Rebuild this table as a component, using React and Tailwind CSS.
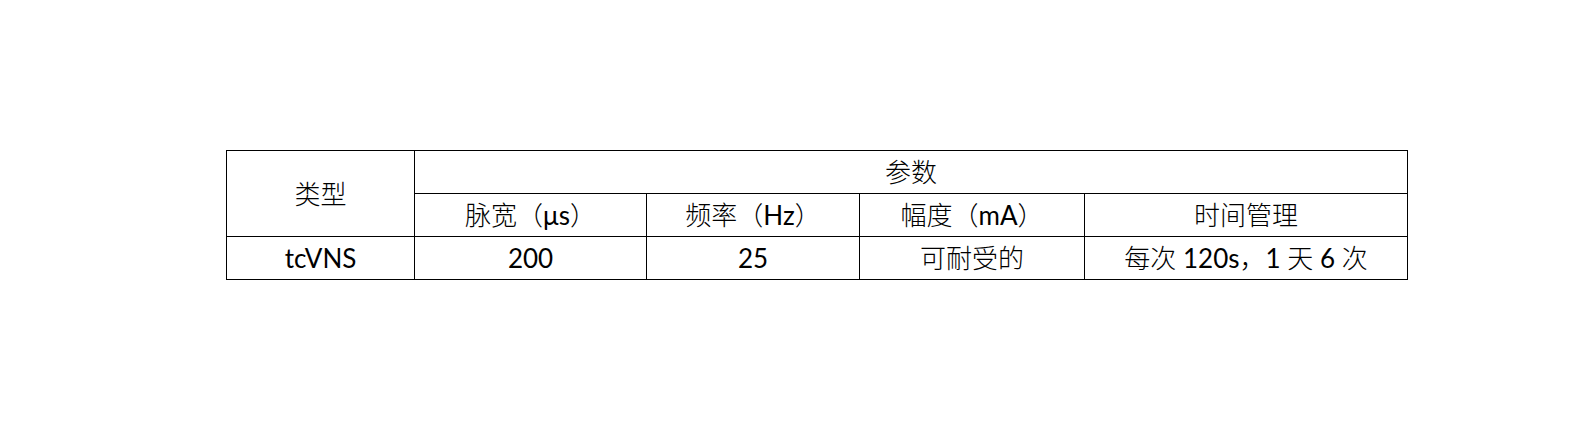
function C({ children }) {
  return <span className="font-light">{children}</span>;
}

export default function App() {
  const cell = "border border-black text-center align-middle p-0";
  return (
    <div
      className="w-[1587px] h-[430px] bg-white pt-[150px] pl-[226px] text-black"
      style={{ fontFamily: '"Lato", "Noto Sans CJK SC", sans-serif' }}
    >
      <table className="table-fixed border-collapse w-[1181px] text-[26px] leading-none">
        <colgroup>
          <col className="w-[188px]" />
          <col className="w-[232px]" />
          <col className="w-[213px]" />
          <col className="w-[225px]" />
          <col className="w-[323px]" />
        </colgroup>
        <tbody>
          <tr className="h-[43px]">
            <td rowSpan={2} className={cell}><C>类型</C></td>
            <td colSpan={4} className={cell}><C>参数</C></td>
          </tr>
          <tr className="h-[43px]">
            <td className={cell}><C>脉宽（</C>μs<C>）</C></td>
            <td className={cell}><C>频率（</C>Hz<C>）</C></td>
            <td className={cell}><C>幅度（</C>mA<C>）</C></td>
            <td className={cell}><C>时间管理</C></td>
          </tr>
          <tr className="h-[43px]">
            <td className={cell}>tcVNS</td>
            <td className={cell}>200</td>
            <td className={cell}>25</td>
            <td className={cell}><C>可耐受的</C></td>
            <td className={cell}><C>每次</C> 120s<C>，</C>1 <C>天</C> 6 <C>次</C></td>
          </tr>
        </tbody>
      </table>
    </div>
  );
}
